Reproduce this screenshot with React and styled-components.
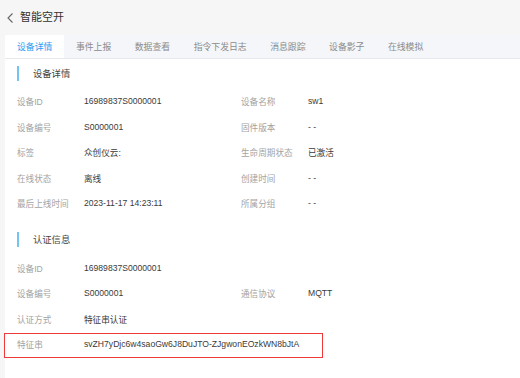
import React from "react";
import styled, { createGlobalStyle } from "styled-components";

const Global = createGlobalStyle`
  html, body { margin: 0; padding: 0; background: #f6f6f6; }
  body { font-family: "Liberation Sans", "Noto Sans CJK SC", sans-serif; width: 520px; height: 378px; overflow: hidden; }
`;

const Page = styled.div`
  width: 520px;
  height: 378px;
  display: flex;
  flex-direction: column;
`;

const Header = styled.div`
  height: 35px;
  display: flex;
  align-items: center;
  padding-left: 6px;
  gap: 5px;
`;

const Title = styled.span`
  font-size: 11px;
  color: #333;
  line-height: 1;
  margin-top: -1px;
`;

const Card = styled.div`
  flex: 1;
  margin-left: 5px;
  background: #fff;
  display: flex;
  flex-direction: column;
`;

const Tabs = styled.div`
  height: 23px;
  display: flex;
  background: #f4f6f9;
  border-bottom: 1px solid #e6e9ee;
`;

const Tab = styled.div`
  padding: 0 11.5px 0 12px;
  display: flex;
  align-items: center;
  font-size: 8.85px;
  color: ${(p) => (p.$active ? "#2b9cf0" : "#8c8c8c")};
  background: ${(p) => (p.$active ? "#fff" : "transparent")};
  white-space: nowrap;
`;

const Body = styled.div`
  padding: 6px 0 0 12px;
  display: flex;
  flex-direction: column;
`;

const SectionTitle = styled.div`
  height: 16px;
  display: flex;
  align-items: center;
  gap: 14px;
  font-size: 9.3px;
  color: #444;
  margin-top: ${(p) => p.$top || 0}px;
  margin-bottom: ${(p) => p.$bottom || 7}px;
  &::before {
    content: "";
    width: 2px;
    height: 15px;
    background: #74c4f2;
  }
`;

const Grid = styled.div`
  display: grid;
  grid-template-columns: 67px 157px 67px 1fr;
  grid-auto-rows: 25.5px;
`;

const Row = styled.div`
  display: contents;
`;

const Label = styled.div`
  font-size: 8.6px;
  color: #a3a3a3;
  display: flex;
  align-items: center;
  white-space: nowrap;
`;

const Value = styled.div`
  font-size: 8.6px;
  color: #3a3a3a;
  display: flex;
  align-items: center;
  white-space: nowrap;
  position: relative;
`;

const HighlightRow = styled.div`
  grid-column: 1 / -1;
  display: grid;
  grid-template-columns: 67px 1fr;
  position: relative;
`;

const Highlight = styled.div`
  position: absolute;
  left: -13px;
  top: 1px;
  width: 319px;
  height: 25px;
  border: 1.5px solid #f03a3a;
  box-sizing: border-box;
  pointer-events: none;
`;

const Back = () => (
  <svg width="9" height="12" viewBox="0 0 9 12">
    <path d="M6.5 1.5 L2 6 L6.5 10.5" fill="none" stroke="#666" strokeWidth="1.1" />
  </svg>
);

const tabs = ["设备详情", "事件上报", "数据查看", "指令下发日志", "消息跟踪", "设备影子", "在线模拟"];

const detail = [
  ["设备ID", "16989837S0000001", "设备名称", "sw1"],
  ["设备编号", "S0000001", "固件版本", "- -"],
  ["标签", "众创仪云:", "生命周期状态", "已激活"],
  ["在线状态", "离线", "创建时间", "- -"],
  ["最后上线时间", "2023-11-17 14:23:11", "所属分组", "- -"],
];

const auth = [
  ["设备ID", "16989837S0000001", "", ""],
  ["设备编号", "S0000001", "通信协议", "MQTT"],
  ["认证方式", "特征串认证", "", ""],
];

export default function App() {
  return (
    <Page>
      <Global />
      <Header>
        <Back />
        <Title>智能空开</Title>
      </Header>
      <Card>
        <Tabs>
          {tabs.map((t, i) => (
            <Tab key={t} $active={i === 0}>{t}</Tab>
          ))}
        </Tabs>
        <Body>
          <SectionTitle $bottom={7.5}>设备详情</SectionTitle>
          <Grid>
            {detail.map((r) => (
              <Row key={r[0]}>
                <Label>{r[0]}</Label>
                <Value>{r[1]}</Value>
                <Label>{r[2]}</Label>
                <Value>{r[3]}</Value>
              </Row>
            ))}
          </Grid>
          <SectionTitle $top={15} $bottom={8}>认证信息</SectionTitle>
          <Grid>
            {auth.map((r) => (
              <Row key={r[0]}>
                <Label>{r[0]}</Label>
                <Value>{r[1]}</Value>
                <Label>{r[2]}</Label>
                <Value>{r[3]}</Value>
              </Row>
            ))}
            <HighlightRow>
              <Highlight />
              <Label>特征串</Label>
              <Value>svZH7yDjc6w4saoGw6J8DuJTO-ZJgwonEOzkWN8bJtA</Value>
            </HighlightRow>
          </Grid>
        </Body>
      </Card>
    </Page>
  );
}
